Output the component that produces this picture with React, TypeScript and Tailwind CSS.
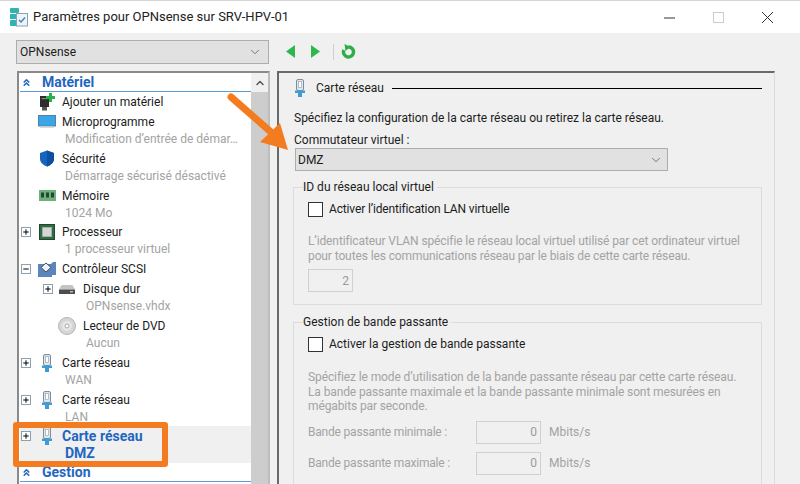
import { ChevronDown, ChevronUp, ChevronsUp, Minus, Plus } from "lucide-react";

const font = { fontFamily: 'Roboto, "Noto Sans", sans-serif' };

function NicIcon({ className = "h-[18px] w-[12px]" }: { className?: string }) {
  return (
    <svg viewBox="0 0 12 18" className={className}>
      <rect x="2.5" y="0.5" width="7" height="11" rx="1.5" fill="#dfe6ec" stroke="#7d8d9c" />
      <rect x="4.5" y="2.5" width="3" height="6" fill="#fff" stroke="#9aa7b3" strokeWidth="0.7" />
      <path d="M1 11.5h10v2.5H8v4H4v-4H1z" fill="#3f9bd1" />
    </svg>
  );
}

function AddHardwareIcon() {
  return (
    <svg viewBox="0 0 18 18" className="h-[18px] w-[18px]">
      <rect x="2" y="3" width="9" height="11" fill="#2d2d2d" />
      <rect x="4" y="14" width="5" height="3.5" fill="#555" />
      <rect x="3.5" y="5" width="6" height="1.2" fill="#888" />
      <path d="M11 0h3v3h3v3h-3v3h-3V6H8V3h3z" fill="#27b24a" />
    </svg>
  );
}

function MonitorIcon() {
  return (
    <svg viewBox="0 0 18 15" className="h-[15px] w-[18px]">
      <rect x="0.5" y="0.5" width="17" height="10.5" fill="#38a6e8" stroke="#5a7f9c" />
      <rect x="2" y="11.5" width="14" height="1.5" fill="#d5dade" />
    </svg>
  );
}

function ShieldIcon() {
  return (
    <svg viewBox="0 0 16 17" className="h-[17px] w-[16px]">
      <path d="M8 0.5l7 2.5v5.5c0 4-3 6.500-7 8-4-1.500-7-4-7-8V3z" fill="#1565c0" />
      <path d="M8 0.5l7 2.500v5.500c0 4-3 6.500-7 8z" fill="#0f4f9e" />
    </svg>
  );
}

function MemoryIcon() {
  return (
    <svg viewBox="0 0 17 11" className="h-[11px] w-[17px]">
      <rect x="0" y="0" width="17" height="11" fill="#6fb07d" />
      <rect x="2" y="2.500" width="3" height="5" fill="#234a30" />
      <rect x="7" y="2.500" width="3" height="5" fill="#234a30" />
      <rect x="12" y="2.500" width="3" height="5" fill="#234a30" />
    </svg>
  );
}

function CpuIcon() {
  return (
    <svg viewBox="0 0 16 16" className="h-4 w-4">
      <rect x="0.500" y="0.500" width="15" height="15" fill="#2f6b43" stroke="#1d4a2d" />
      <rect x="3.500" y="3.500" width="9" height="9" fill="#d3d6d3" stroke="#a7aca7" />
    </svg>
  );
}

function ScsiIcon() {
  return (
    <svg viewBox="0 0 18 15" className="h-[15px] w-[18px]">
      <path d="M0 2h13l2-2h3v13h-4v2H0z" fill="#5a86bd" />
      <path d="M8 1l5 4.500-5 4.500-5-4.500z" fill="#eef2f6" stroke="#40506a" />
    </svg>
  );
}

function DiskIcon() {
  return (
    <svg viewBox="0 0 16 9" className="h-[9px] w-4">
      <path d="M2.500 0h11l2.500 4.500H0z" fill="#c5c5c5" />
      <rect x="0" y="4.500" width="16" height="4.500" fill="#4d4d4d" />
      <rect x="11" y="6" width="3" height="1.500" fill="#9ad29a" />
    </svg>
  );
}

function DvdIcon() {
  return (
    <svg viewBox="0 0 18 18" className="h-[18px] w-[18px]">
      <circle cx="9" cy="9" r="8.500" fill="#d6d6d6" stroke="#b5b5b5" />
      <circle cx="9" cy="9" r="5" fill="#e6e6e6" />
      <circle cx="9" cy="9" r="2" fill="#fff" stroke="#aaa" />
    </svg>
  );
}

function TreeToggle({ open = false }: { open?: boolean }) {
  const Icon = open ? Minus : Plus;
  return (
    <span className="flex h-[10px] w-[10px] items-center justify-center border border-[#8ba0b3] bg-white text-black">
      <Icon className="h-[8px] w-[8px]" strokeWidth={3} />
    </span>
  );
}

type TreeItem = {
  label: string;
  sub?: string;
  icon: React.ReactNode;
  toggle?: "plus" | "minus";
  indent?: boolean;
  selected?: boolean;
};

const items: TreeItem[] = [
  { label: "Ajouter un matériel", icon: <AddHardwareIcon /> },
  { label: "Microprogramme", sub: "Modification d’entrée de démar…", icon: <MonitorIcon /> },
  { label: "Sécurité", sub: "Démarrage sécurisé désactivé", icon: <ShieldIcon /> },
  { label: "Mémoire", sub: "1024 Mo", icon: <MemoryIcon /> },
  { label: "Processeur", sub: "1 processeur virtuel", icon: <CpuIcon />, toggle: "plus" },
  { label: "Contrôleur SCSI", icon: <ScsiIcon />, toggle: "minus" },
  { label: "Disque dur", sub: "OPNsense.vhdx", icon: <DiskIcon />, toggle: "plus", indent: true },
  { label: "Lecteur de DVD", sub: "Aucun", icon: <DvdIcon />, indent: true },
  { label: "Carte réseau", sub: "WAN", icon: <NicIcon />, toggle: "plus" },
  { label: "Carte réseau", sub: "LAN", icon: <NicIcon />, toggle: "plus" },
  { label: "Carte réseau", sub: "DMZ", icon: <NicIcon />, toggle: "plus", selected: true },
];

function TreeRow({ item }: { item: TreeItem }) {
  return (
    <div className={item.selected ? "bg-[#f0f0f0] text-[14px] font-bold text-[#1f66c1]" : "text-[#1c1c1c]"}>
      <div className={`relative flex h-[20px] items-center whitespace-nowrap ${item.indent ? "pl-[63px]" : "pl-[42px]"}`}>
        {item.toggle && (
          <span className={`absolute top-[5px] ${item.indent ? "left-[23px]" : "left-[1px]"}`}>
            <TreeToggle open={item.toggle === "minus"} />
          </span>
        )}
        <span className={`absolute top-0 flex h-[20px] w-[20px] items-center justify-center ${item.indent ? "left-[37px]" : "left-[17px]"}`}>
          {item.icon}
        </span>
        {item.label}
      </div>
      {item.sub && (
        <div
          className={`h-[16.8px] whitespace-nowrap leading-[14px] ${item.indent ? "pl-[66px]" : "pl-[45px]"} ${
            item.selected ? "" : "text-[#a3a3a3]"
          }`}
        >
          {item.sub}
        </div>
      )}
    </div>
  );
}

function SectionHeader({ label }: { label: string }) {
  return (
    <div className="flex h-[19px] items-center gap-[10px] border-b border-[#5a9bdc] pl-[1px] pt-[1px] text-[14px] font-bold text-[#1f66c1]">
      <ChevronsUp className="h-[11px] w-[11px]" strokeWidth={3.5} />
      {label}
    </div>
  );
}

function Checkbox({ label, className = "" }: { label: string; className?: string }) {
  return (
    <div className="flex h-[15px] items-center gap-[6px] text-[#1c1c1c]">
      <span className="h-[15px] w-[15px] border border-[#333] bg-white" />
      <span className={`-mt-[2px] ${className}`}>{label}</span>
    </div>
  );
}

function DisabledInput({ value, className }: { value: string; className: string }) {
  return (
    <div className={`flex h-[23px] items-center justify-end border border-[#d0d0d0] pr-[3px] text-[#9a9a9a] ${className}`}>
      {value}
    </div>
  );
}

function GroupBox({ title, className, children }: { title: string; className: string; children: React.ReactNode }) {
  return (
    <div className={`relative ml-[14px] w-[469px] border border-[#dcdcdc] pl-[14px] ${className}`}>
      <span className="absolute -top-[9px] left-[9px] bg-[#f0f0f0] pr-[3px] leading-[16px] text-[#1c1c1c]">{title}</span>
      {children}
    </div>
  );
}

function BandwidthRow({ label }: { label: string }) {
  return (
    <div className="flex h-[23px] items-center text-[#a3a3a3]">
      <span className="w-[168px] tracking-[-0.2px]">{label}</span>
      <DisabledInput value="0" className="w-[65px]" />
      <span className="ml-[8px]">Mbits/s</span>
    </div>
  );
}

export default function App() {
  return (
    <div style={font} className="relative flex h-[484px] w-[800px] flex-col overflow-hidden bg-[#f0f0f0] text-[12px]">
      <header className="flex h-[33px] shrink-0 items-center border-t border-[#d4d4d4] bg-white pl-[10px] text-[13px] text-[#222]">
        <svg viewBox="0 0 18 19" className="mr-[5px] h-[19px] w-[18px]">
          <rect x="0" y="0" width="9" height="5" rx="1" fill="#2fb3b5" />
          <rect x="0" y="6" width="9" height="5" fill="#2fb3b5" />
          <rect x="0" y="12" width="9" height="6" rx="1" fill="#2fb3b5" />
          <rect x="6.500" y="5.500" width="11" height="12.500" fill="#eef3f7" stroke="#8da1af" />
          <path d="M9 12l2 2 4-4.500" fill="none" stroke="#3b7fb5" strokeWidth="1.300" />
        </svg>
        Paramètres pour OPNsense sur SRV-HPV-01
        <div className="ml-auto flex items-center gap-[38px] pr-[27px]">
          <svg viewBox="0 0 11 11" className="h-[11px] w-[11px]">
            <path d="M0 6h11" stroke="#333" strokeWidth="1" />
          </svg>
          <svg viewBox="0 0 11 11" className="h-[11px] w-[11px]">
            <rect x="0.500" y="0.500" width="10" height="10" fill="none" stroke="#ccc" />
          </svg>
          <svg viewBox="0 0 11 11" className="h-[11px] w-[11px]">
            <path d="M0 0l11 11M11 0L0 11" stroke="#333" strokeWidth="1" />
          </svg>
        </div>
      </header>

      <div className="flex h-[38px] shrink-0 items-start pl-[16px] pt-[7px]">
        <div className="flex h-[24px] w-[253px] items-center justify-between border border-[#adadad] bg-[#e1e1e1] pl-[3px] pr-[6px] text-[#1c1c1c]">
          OPNsense
          <ChevronDown className="h-[14px] w-[14px] text-[#666]" strokeWidth={1.500} />
        </div>
        <svg viewBox="0 0 34 13" className="ml-[17px] mt-[5px] h-[13px] w-[34px]">
          <path d="M9 0v13L0 6.500z" fill="#2db84d" />
          <path d="M25 0v13l9-6.500z" fill="#2db84d" />
        </svg>
        <span className="ml-[13px] mt-[4px] h-[16px] w-px bg-[#cfcfcf]" />
        <svg viewBox="0 0 15 15" className="ml-[7px] mt-[4px] h-[15px] w-[15px]">
          <path d="M7.500 3a5 5 0 1 1-4.600 3" fill="none" stroke="#2cae48" strokeWidth="3.400" />
          <path d="M3.500 0l6 3-5 4z" fill="#2cae48" />
        </svg>
      </div>

      <main className="flex min-h-0 flex-1 pl-[17px]">
        <aside className="relative flex h-[420px] w-[253px] shrink-0 border-l-2 border-r-2 border-t-2 border-l-[#8a8a8a] border-r-[#bdbdbd] border-t-[#8a8a8a] bg-white">
          <div className="min-w-0 flex-1 pl-[1px]">
            <SectionHeader label="Matériel" />
            {items.map((item, i) => (
              <TreeRow key={i} item={item} />
            ))}
            <SectionHeader label="Gestion" />
          </div>
          <div className="flex w-[17px] shrink-0 flex-col bg-[#cdcdcd]">
            <div className="flex h-[19px] items-center justify-center bg-[#f0f0f0]">
              <ChevronUp className="h-[12px] w-[12px] text-[#555]" strokeWidth={3} />
            </div>
          </div>
        </aside>

        <section className="ml-[7px] h-[420px] w-[498px] shrink-0 border-l-2 border-r border-t-2 border-l-[#696969] border-r-[#dcdcdc] border-t-[#696969] text-[#1c1c1c]">
          <div className="flex h-[30px] items-center pl-[15px] pr-[12px]">
            <NicIcon />
            <span className="ml-[10px] mr-[8px]">Carte réseau</span>
            <span className="h-px flex-1 bg-black" />
          </div>
          <p className="ml-[15px] mt-[7px] leading-[16px]">Spécifiez la configuration de la carte réseau ou retirez la carte réseau.</p>
          <p className="ml-[15px] mt-[6px] leading-[16px]">Commutateur virtuel :</p>
          <div className="ml-[16px] flex h-[23px] w-[373px] items-center justify-between border border-[#adadad] bg-[#e1e1e1] pl-[2px] pr-[4px]">
            DMZ
            <ChevronDown className="h-[14px] w-[14px] text-[#666]" strokeWidth={1.500} />
          </div>

          <GroupBox title="ID du réseau local virtuel" className="mt-[16px] h-[118px] pt-[14px]">
            <Checkbox label="Activer l’identification LAN virtuelle" className="tracking-[-0.15px]" />
            <p className="mt-[17px] leading-[14.500px] tracking-[-0.11px] text-[#a3a3a3]">
              L’identificateur VLAN spécifie le réseau local virtuel utilisé par cet ordinateur virtuel
              <br />
              pour toutes les communications réseau par le biais de cette carte réseau.
            </p>
            <DisabledInput value="2" className="mt-[6px] w-[45px]" />
          </GroupBox>

          <GroupBox title="Gestion de bande passante" className="mt-[17px] h-[200px] pt-[14px]">
            <Checkbox label="Activer la gestion de bande passante" />
            <p className="mt-[18px] leading-[14.500px] tracking-[-0.11px] text-[#a3a3a3]">
              Spécifiez le mode d’utilisation de la bande passante réseau par cette carte réseau.
              <br />
              La bande passante maximale et la bande passante minimale sont mesurées en
              <br />
              mégabits par seconde.
            </p>
            <div className="mt-[7px] flex flex-col gap-[8px]">
              <BandwidthRow label="Bande passante minimale :" />
              <BandwidthRow label="Bande passante maximale :" />
            </div>
            <span className="mt-[9px] block h-[13px] w-[13px] rounded-full border border-[#c8c8c8]" />
          </GroupBox>
        </section>
      </main>

      {/* annotations on top of the screenshot */}
      <div className="absolute left-[13px] top-[422px] h-[45px] w-[155px] rounded-[3px] border-[6px] border-[#f47c20]" />
      <svg viewBox="0 0 800 484" className="pointer-events-none absolute left-0 top-0 h-[484px] w-[800px]">
        <path d="M231 97L272 133" stroke="#f47c20" strokeWidth="7" strokeLinecap="round" />
        <path d="M288 150L260 142L280 123z" fill="#f47c20" />
      </svg>
    </div>
  );
}
